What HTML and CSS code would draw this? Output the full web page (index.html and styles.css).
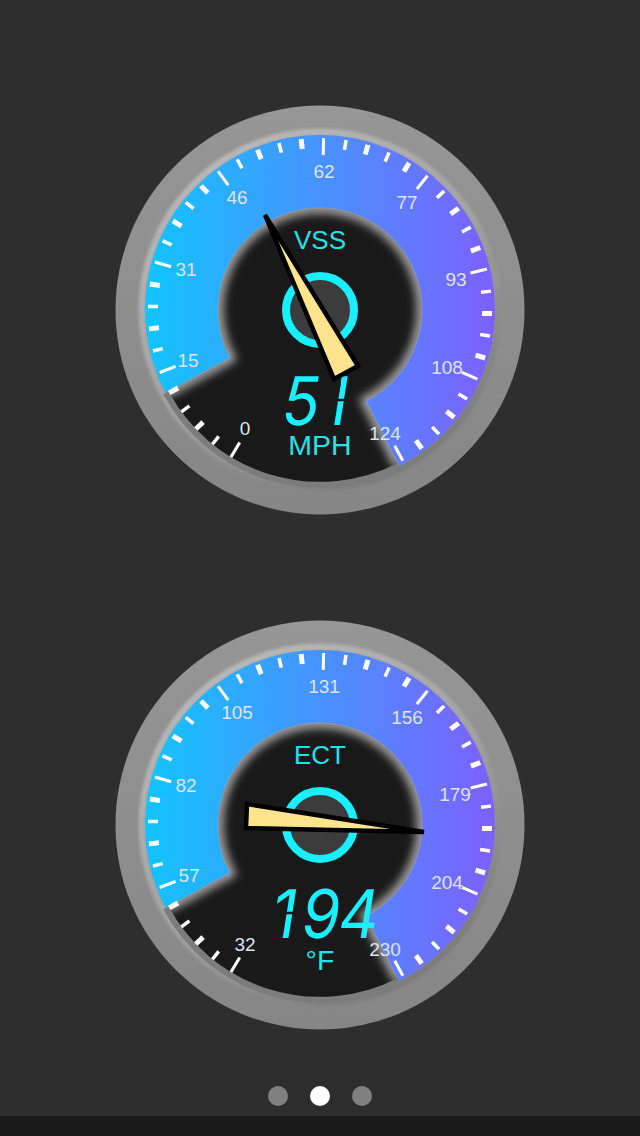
FILE: index.html
```html
<!DOCTYPE html>
<html>
    <head>
        <meta charset="utf-8">
        <title>Gauges</title>
        <link rel="stylesheet" href="styles.css">
    </head>
    <body>
        <div class="page">
            <svg class="gauge" viewBox="-205 -205 410 410">
                <defs>
                    <linearGradient id="bezel" x1="0" y1="0" x2="0" y2="1">
                        <stop offset="0" stop-color="#969696"/>
                        <stop offset="1" stop-color="#868686"/>
                    </linearGradient>
                    <linearGradient id="bevelgrad" x1="0.1" y1="0" x2="0.75" y2="1">
                        <stop offset="0" stop-color="#bdbdbd"/>
                        <stop offset="0.55" stop-color="#a2a2a2"/>
                        <stop offset="1" stop-color="#777"/>
                    </linearGradient>
                    <linearGradient id="face" gradientUnits="userSpaceOnUse" x1="-175" y1="0" x2="175" y2="0">
                        <stop offset="0" stop-color="#12c4ff"/>
                        <stop offset="1" stop-color="#7d60ff"/>
                    </linearGradient>
                    <filter id="soft" x="-20%" y="-20%" width="140%" height="140%">
                        <feGaussianBlur stdDeviation="5"/>
                    </filter>
                    <filter id="softer" x="-20%" y="-20%" width="140%" height="140%">
                        <feGaussianBlur stdDeviation="1.5"/>
                    </filter>
                    <clipPath id="darkclip">
                        <path d="M-90 48L-154 83A175 175 0 0 0 79 156L46 91A102 102 0 1 0 -90 48Z"/>
                    </clipPath>
                    <mask id="segs51" maskUnits="userSpaceOnUse" x="-100" y="-60" width="200" height="70">
                        <rect class="mask-on" x="-100" y="-60" width="200" height="70"/>
                        <g class="mask-off">
                            <line x1="8" y1="-25" x2="26" y2="-25"/>
                            <rect x="-2" y="-60" width="16" height="30"/>
                        </g>
                    </mask>
                    <mask id="segs194" maskUnits="userSpaceOnUse" x="-100" y="-60" width="200" height="70">
                        <rect class="mask-on" x="-100" y="-60" width="200" height="70"/>
                        <g class="mask-off">
                            <line x1="-50" y1="-25" x2="-30" y2="-25"/>
                        </g>
                    </mask>
                    <g id="dial">
                        <circle class="bezel" r="204.5"/>
                        <circle class="bevel" r="178" filter="url(#softer)"/>
                        <circle class="face" r="175"/>
                        <path class="dark" d="M-90 48L-154 83A175 175 0 0 0 79 156L46 91A102 102 0 1 0 -90 48Z"/>
                        <g clip-path="url(#darkclip)">
                            <path class="glow" d="M-154 83L-90 48A102 102 0 1 1 46 91L79 156" filter="url(#soft)"/>
                        </g>
                        <path class="edge" d="M-154 83L-90 48A102 102 0 1 1 46 91L79 156"/>
                        <path class="lip" d="M-154 83A175 175 0 0 0 79 156"/>
                        <g id="ticks"></g>
                        <circle class="hub" r="34"/>
                    </g>
                </defs>
                <use href="#dial"/>
                <text class="mark" x="-75" y="125">0</text>
                <text class="mark" x="-132" y="57">15</text>
                <text class="mark" x="-134" y="-34">31</text>
                <text class="mark" x="-83" y="-106">46</text>
                <text class="mark" x="4" y="-132">62</text>
                <text class="mark" x="87" y="-101">77</text>
                <text class="mark" x="136" y="-24">93</text>
                <text class="mark" x="127" y="64">108</text>
                <text class="mark" x="65" y="130">124</text>
                <text class="title" x="0" y="-61">VSS</text>
                <g transform="translate(0 115) skewX(-9) scale(0.92 1)" mask="url(#segs51)">
                    <text class="digits" x="-24 14">51</text>
                </g>
                <text class="unit" x="0" y="145">MPH</text>
                <polygon class="needle" points="-55,-95 38,56 14,69"/>
            </svg>

            <svg class="gauge" viewBox="-205 -205 410 410">
                <use href="#dial"/>
                <text class="mark" x="-75" y="126">32</text>
                <text class="mark" x="-131" y="57">57</text>
                <text class="mark" x="-134" y="-33">82</text>
                <text class="mark" x="-83" y="-106">105</text>
                <text class="mark" x="4" y="-132">131</text>
                <text class="mark" x="87" y="-101">156</text>
                <text class="mark" x="135" y="-24">179</text>
                <text class="mark" x="127" y="64">204</text>
                <text class="mark" x="65" y="131">230</text>
                <text class="title" x="0" y="-61">ECT</text>
                <g transform="translate(0 113) skewX(-9) scale(0.92 1)" mask="url(#segs194)">
                    <text class="digits" x="-42 -2 39">194</text>
                </g>
                <text class="unit" x="0" y="145">°F</text>
                <polygon class="needle" points="104,7 -73,-21 -74,3"/>
            </svg>

            <div class="dots">
                <span class="dot"></span>
                <span class="dot on"></span>
                <span class="dot"></span>
            </div>
        </div>
        <div class="bottombar"></div>
        <script>
            // 8 sections of 37.5deg, each split in 5. the scale sits 1.2deg off centre
            var ticks=document.getElementById('ticks')
            for (var i=0;i<=40;i++){
                var a=(i*7.5-148.8)*Math.PI/180
                var kind='thin'
                if (i%5==0) kind='major'
                else if (i%5==2||i%5==4) kind='thick'
                var inner=kind=='major'?155:162
                var line=document.createElementNS('http://www.w3.org/2000/svg','line')
                line.setAttribute('x1',inner*Math.sin(a))
                line.setAttribute('y1',-inner*Math.cos(a))
                line.setAttribute('x2',172*Math.sin(a))
                line.setAttribute('y2',-172*Math.cos(a))
                line.setAttribute('class','tick '+kind)
                ticks.appendChild(line)
            }
        </script>
    </body>
</html>
```

FILE: styles.css
```css
body{
    margin: 0;
    background: #2e2e2e;
    height: 1136px;
    overflow: hidden;
    display: flex;
    flex-direction: column;
}
.page{
    flex: 1;
    display: flex;
    flex-direction: column;
    align-items: center;
    padding-top: 105px;
    gap: 105px;
}
.gauge{
    width: 410px;
    height: 410px;
    display: block;
}
.bezel{
    fill: url(#bezel);
}
.bevel{
    fill: none;
    stroke: url(#bevelgrad);
    stroke-width: 7;
}
.face{
    fill: url(#face);
}
.dark{
    fill: #191919;
}
.glow{
    fill: none;
    stroke: #b0b0b0;
    stroke-width: 10;
}
.edge{
    fill: none;
    stroke: #a8a8a8;
    stroke-width: 0.7;
}
.lip{
    fill: none;
    stroke: #7c7c7c;
    stroke-width: 6;
}
.hub{
    fill: #3c3c3c;
    stroke: #18f0ff;
    stroke-width: 8;
}
.tick{
    stroke: #fff;
    stroke-width: 3.5;
}
.tick.major{
    stroke-width: 3;
}
.tick.thick{
    stroke-width: 5;
}
.mark{
    font-family: "Liberation Sans", sans-serif;
    font-size: 19px;
    fill: #dfe4f4;
    text-anchor: middle;
}
.title, .unit{
    font-family: "Liberation Sans", sans-serif;
    fill: #24e2ea;
    text-anchor: middle;
}
.title{
    font-size: 26px;
}
.unit{
    font-size: 28.5px;
}
.digits{
    font-family: Inter, sans-serif;
    font-size: 67px;
    fill: #18f0ff;
    text-anchor: middle;
}
.mask-on{
    fill: #fff;
}
.mask-off{
    fill: #000;
    stroke: #000;
    stroke-width: 2.5;
}
.needle{
    fill: #ffe48e;
    stroke: #000;
    stroke-width: 4.5;
    stroke-linejoin: miter;
    stroke-miterlimit: 4;
}
.dots{
    display: flex;
    justify-content: center;
    gap: 22px;
    margin-top: -49px;
}
.dot{
    width: 20px;
    height: 20px;
    border-radius: 50%;
    background: #808080;
}
.dot.on{
    background: #fff;
}
.bottombar{
    height: 20px;
    background: #1a1a1a;
}
```
